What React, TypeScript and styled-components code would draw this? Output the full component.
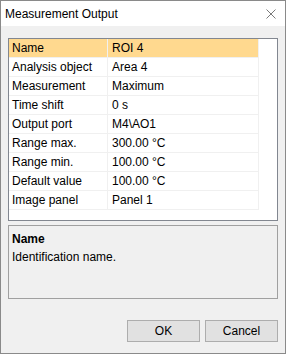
import React from 'react';
import styled, { createGlobalStyle } from 'styled-components';

const GlobalStyle = createGlobalStyle`
  html, body {
    margin: 0;
    padding: 0;
    background: #f0f0f0;
  }
  * {
    box-sizing: border-box;
  }
`;

const Window = styled.div`
  width: 286px;
  height: 354px;
  display: flex;
  flex-direction: column;
  border: 1px solid #8a8a8a;
  background: #f0f0f0;
  font-family: 'Liberation Sans', Arial, sans-serif;
  font-size: 12px;
  color: #000;
`;

const TitleBar = styled.div`
  height: 25px;
  flex: none;
  display: flex;
  align-items: center;
  justify-content: space-between;
  padding: 0 9px 0 4px;
  background: #fff;
`;

const Title = styled.span`
  font-size: 12px;
  color: #000;
`;

const CloseIcon = styled.svg`
  width: 10px;
  height: 10px;
  display: block;
`;

const Body = styled.div`
  flex: 1;
  display: flex;
  flex-direction: column;
  padding: 12px 7px 11px;
`;

const GridPanel = styled.div`
  height: 183px;
  flex: none;
  border: 1px solid #828790;
  background: #fff;
`;

const Table = styled.div`
  width: 250px;
  display: grid;
  grid-template-columns: 99px 151px;
`;

const Cell = styled.div<{ $selected?: boolean; $value?: boolean }>`
  height: 19px;
  line-height: 18px;
  padding-left: ${(p) => (p.$value ? '4px' : '3px')};
  white-space: nowrap;
  overflow: hidden;
  background: ${(p) => (p.$selected ? '#ffd98f' : '#fff')};
  border-bottom: 1px solid #f0f0f0;
  border-right: ${(p) => (p.$value ? '1px solid #f0f0f0' : '1px solid #f0f0f0')};
`;

const DescPanel = styled.div`
  margin-top: 4px;
  height: 74px;
  flex: none;
  border: 1px solid #a0a0a0;
  background: #f0f0f0;
  padding: 4px 3px 0;
  line-height: 18px;
`;

const DescTitle = styled.div`
  font-weight: bold;
`;

const ButtonRow = styled.div`
  margin-top: auto;
  display: flex;
  justify-content: flex-end;
  gap: 5px;
`;

const Button = styled.button`
  width: 73px;
  height: 22px;
  padding: 0;
  border: 1px solid #adadad;
  background: #e1e1e1;
  font-family: 'Liberation Sans', Arial, sans-serif;
  font-size: 12px;
  color: #000;
`;

const rows: [string, string][] = [
  ['Name', 'ROI 4'],
  ['Analysis object', 'Area 4'],
  ['Measurement', 'Maximum'],
  ['Time shift', '0 s'],
  ['Output port', 'M4\\AO1'],
  ['Range max.', '300.00 °C'],
  ['Range min.', '100.00 °C'],
  ['Default value', '100.00 °C'],
  ['Image panel', 'Panel 1'],
];

export default function App() {
  return (
    <>
      <GlobalStyle />
      <Window>
        <TitleBar>
          <Title>Measurement Output</Title>
          <CloseIcon viewBox="0 0 10 10">
            <path d="M0.5 0.5 L9.5 9.5 M9.5 0.5 L0.5 9.5" stroke="#7a7a7a" strokeWidth="1" fill="none" />
          </CloseIcon>
        </TitleBar>
        <Body>
          <GridPanel>
            <Table>
              {rows.map(([label, value], i) => (
                <React.Fragment key={label}>
                  <Cell $selected={i === 0}>{label}</Cell>
                  <Cell $selected={i === 0} $value>
                    {value}
                  </Cell>
                </React.Fragment>
              ))}
            </Table>
          </GridPanel>
          <DescPanel>
            <DescTitle>Name</DescTitle>
            <div>Identification name.</div>
          </DescPanel>
          <ButtonRow>
            <Button>OK</Button>
            <Button>Cancel</Button>
          </ButtonRow>
        </Body>
      </Window>
    </>
  );
}
